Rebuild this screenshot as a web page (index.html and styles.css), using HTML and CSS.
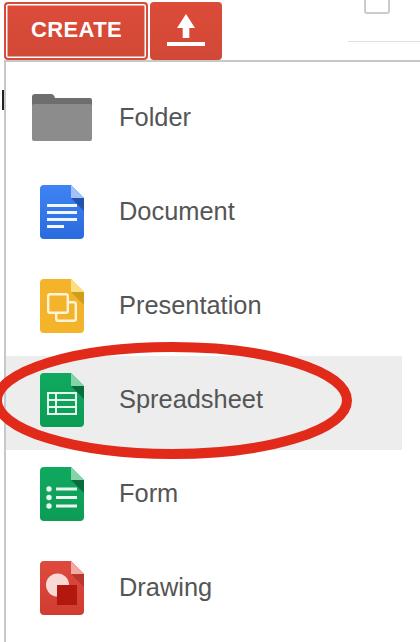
FILE: index.html
```html
<!DOCTYPE html>
<html lang="en">
  <head>
    <meta charset="UTF-8" />
    <meta name="viewport" content="width=device-width, initial-scale=1.0" />
    <title>Create menu</title>
    <link rel="stylesheet" href="styles.css">
  </head>
  <body>
    <header class="toolbar">
      <button class="red-button create-button">CREATE</button>
      <button class="red-button upload-button" aria-label="Upload">
        <svg width="38" height="32" viewBox="0 0 38 32">
          <path d="M19 0 L28 14 H22.3 V24 H15.7 V14 H10 Z" fill="#fff" />
          <rect x="0" y="28" width="38" height="4" fill="#fff" />
        </svg>
      </button>
      <div class="view-tools">
        <div class="checkbox"></div>
      </div>
    </header>

    <div class="menu">
      <span class="stray-mark"></span>

      <div class="menu-item">
        <svg class="folder-icon" width="60" height="47" viewBox="0 0 60 47">
          <path d="M0 3 Q0 0 3 0 H19 Q22 0 23 4 H58 Q60 4 60 6 V14 H0 Z" fill="#6e6e6e" />
          <path d="M0 12 Q0 10 2 10 H58 Q60 10 60 12 V45 Q60 47 58 47 H2 Q0 47 0 45 Z" fill="#8c8c8c" />
        </svg>
        <span class="menu-label">Folder</span>
      </div>

      <div class="menu-item">
        <svg class="file-icon" width="44" height="54" viewBox="0 0 44 54">
          <defs>
            <linearGradient id="docFill" x1="0" y1="0" x2="0" y2="1">
              <stop offset="0" stop-color="#3f83f4" />
              <stop offset="1" stop-color="#2a6bde" />
            </linearGradient>
            <linearGradient id="greenFill" x1="0" y1="0" x2="0" y2="1">
              <stop offset="0" stop-color="#10a95f" />
              <stop offset="1" stop-color="#0c9c55" />
            </linearGradient>
            <linearGradient id="redFill" x1="0" y1="0" x2="0" y2="1">
              <stop offset="0" stop-color="#df4a3e" />
              <stop offset="1" stop-color="#d13c31" />
            </linearGradient>
          </defs>
          <path d="M4 0 H31 L44 13 V50 Q44 54 40 54 H4 Q0 54 0 50 V4 Q0 0 4 0 Z" fill="url(#docFill)" />
          <path d="M31 13 H44 V26 Z" fill="#2352ab" />
          <path d="M31 0 L44 13 H31 Z" fill="#a4c2fa" />
          <g fill="#f1f5fd">
            <rect x="7" y="19" width="30" height="3" />
            <rect x="7" y="26" width="30" height="3" />
            <rect x="7" y="33" width="30" height="3" />
            <rect x="7" y="40" width="17" height="3" />
          </g>
        </svg>
        <span class="menu-label">Document</span>
      </div>

      <div class="menu-item">
        <svg class="file-icon" width="44" height="54" viewBox="0 0 44 54">
          <path d="M4 0 H31 L44 13 V50 Q44 54 40 54 H4 Q0 54 0 50 V4 Q0 0 4 0 Z" fill="#f3b32a" />
          <path d="M31 13 H44 V26 Z" fill="#cf9c22" />
          <path d="M31 0 L44 13 H31 Z" fill="#fbdf7c" />
          <g fill="#f3b32a" stroke="#fdf4d8" stroke-width="2.4">
            <rect x="16.2" y="23.2" width="19.6" height="18.6" rx="2" />
            <rect x="8.2" y="15.2" width="19.6" height="18.6" rx="2" />
          </g>
        </svg>
        <span class="menu-label">Presentation</span>
      </div>

      <div class="menu-item active">
        <svg class="file-icon" width="44" height="54" viewBox="0 0 44 54">
          <path d="M4 0 H31 L44 13 V50 Q44 54 40 54 H4 Q0 54 0 50 V4 Q0 0 4 0 Z" fill="url(#greenFill)" />
          <path d="M31 13 H44 V26 Z" fill="#0a6c3d" />
          <path d="M31 0 L44 13 H31 Z" fill="#84d4aa" />
          <g fill="none" stroke="#e9f6ef" stroke-width="2">
            <rect x="8" y="20" width="28" height="21" />
            <path d="M8 27 H36 M8 34 H36 M16 20 V41" />
          </g>
        </svg>
        <span class="menu-label">Spreadsheet</span>
        <!-- красный овал поверх строки -->
        <svg class="circle-mark" width="370" height="130" viewBox="0 0 370 130">
          <ellipse cx="185" cy="65.5" rx="175" ry="53.5" fill="none" stroke="#e12a1a" stroke-width="10" />
        </svg>
      </div>

      <div class="menu-item">
        <svg class="file-icon" width="44" height="54" viewBox="0 0 44 54">
          <path d="M4 0 H31 L44 13 V50 Q44 54 40 54 H4 Q0 54 0 50 V4 Q0 0 4 0 Z" fill="url(#greenFill)" />
          <path d="M31 13 H44 V26 Z" fill="#0a6c3d" />
          <path d="M31 0 L44 13 H31 Z" fill="#84d4aa" />
          <g fill="#e9f6ef">
            <circle cx="9" cy="22" r="2.7" />
            <circle cx="9" cy="30.5" r="2.7" />
            <circle cx="9" cy="39" r="2.7" />
            <rect x="16" y="20.5" width="21" height="3" />
            <rect x="16" y="29" width="21" height="3" />
            <rect x="16" y="37.5" width="21" height="3" />
          </g>
        </svg>
        <span class="menu-label">Form</span>
      </div>

      <div class="menu-item">
        <svg class="file-icon" width="44" height="54" viewBox="0 0 44 54">
          <path d="M4 0 H31 L44 13 V50 Q44 54 40 54 H4 Q0 54 0 50 V4 Q0 0 4 0 Z" fill="url(#redFill)" />
          <path d="M31 13 H44 V26 Z" fill="#b8372c" />
          <path d="M31 0 L44 13 H31 Z" fill="#f3a9a2" />
          <circle cx="17.5" cy="24" r="11.5" fill="#f8d9d6" />
          <rect x="17" y="24" width="20" height="20" fill="#b3180f" />
        </svg>
        <span class="menu-label">Drawing</span>
      </div>
    </div>
  </body>
</html>
```

FILE: styles.css
```css
* {
  box-sizing: border-box;
  margin: 0;
  padding: 0;
}

html,
body {
  height: 100%;
  overflow: hidden;
  background: #fff;
}

body {
  font-family: "Liberation Sans", Arial, sans-serif;
}

.toolbar {
  display: flex;
  gap: 2px;
  height: 60px;
  padding: 2px 0 0 4px;
}

.red-button {
  display: flex;
  align-items: center;
  justify-content: center;
  height: 58px;
  border: none;
  border-radius: 4px;
  background: linear-gradient(#dd4b39, #d14836);
  color: #fff;
}

.create-button {
  width: 144px;
  padding: 0 0 2px 1px;
  border: 2px solid #d94a38;
  box-shadow: inset 0 0 0 1.5px #fff;
  font-family: inherit;
  font-size: 22px;
  font-weight: bold;
  letter-spacing: 0.35px;
}

.upload-button {
  width: 72px;
  padding-bottom: 2px;
}

.view-tools {
  width: 72px;
  height: 42px;
  margin: -2px 0 0 auto;
  border-bottom: 1.5px solid #e2e2e2;
}

.checkbox {
  width: 26px;
  height: 26px;
  margin: -12px 0 0 16px;
  border: 2px solid #ccc;
  border-radius: 3px;
}

.menu {
  position: relative;
  height: 582px;
  margin-left: 4px;
  padding-top: 12px;
  border-top: 2px solid #c8c8c8;
  border-left: 2px solid #c8c8c8;
}

.stray-mark {
  position: absolute;
  top: 28px;
  left: -4px;
  width: 2px;
  height: 20px;
  background: #222;
}

.menu-item {
  position: relative;
  display: flex;
  align-items: center;
  width: 396px;
  height: 94px;
  padding-bottom: 6px;
}

.menu-item.active {
  background: #ededed;
}

.file-icon {
  flex: none;
  margin: 0 35px 0 34px;
}

.folder-icon {
  flex: none;
  margin: 0 27px 2px 26px;
}

.menu-label {
  margin-bottom: 2px;
  font-size: 25.4px;
  color: #555;
}

.circle-mark {
  position: absolute;
  top: -21px;
  left: -19px;
}
```
